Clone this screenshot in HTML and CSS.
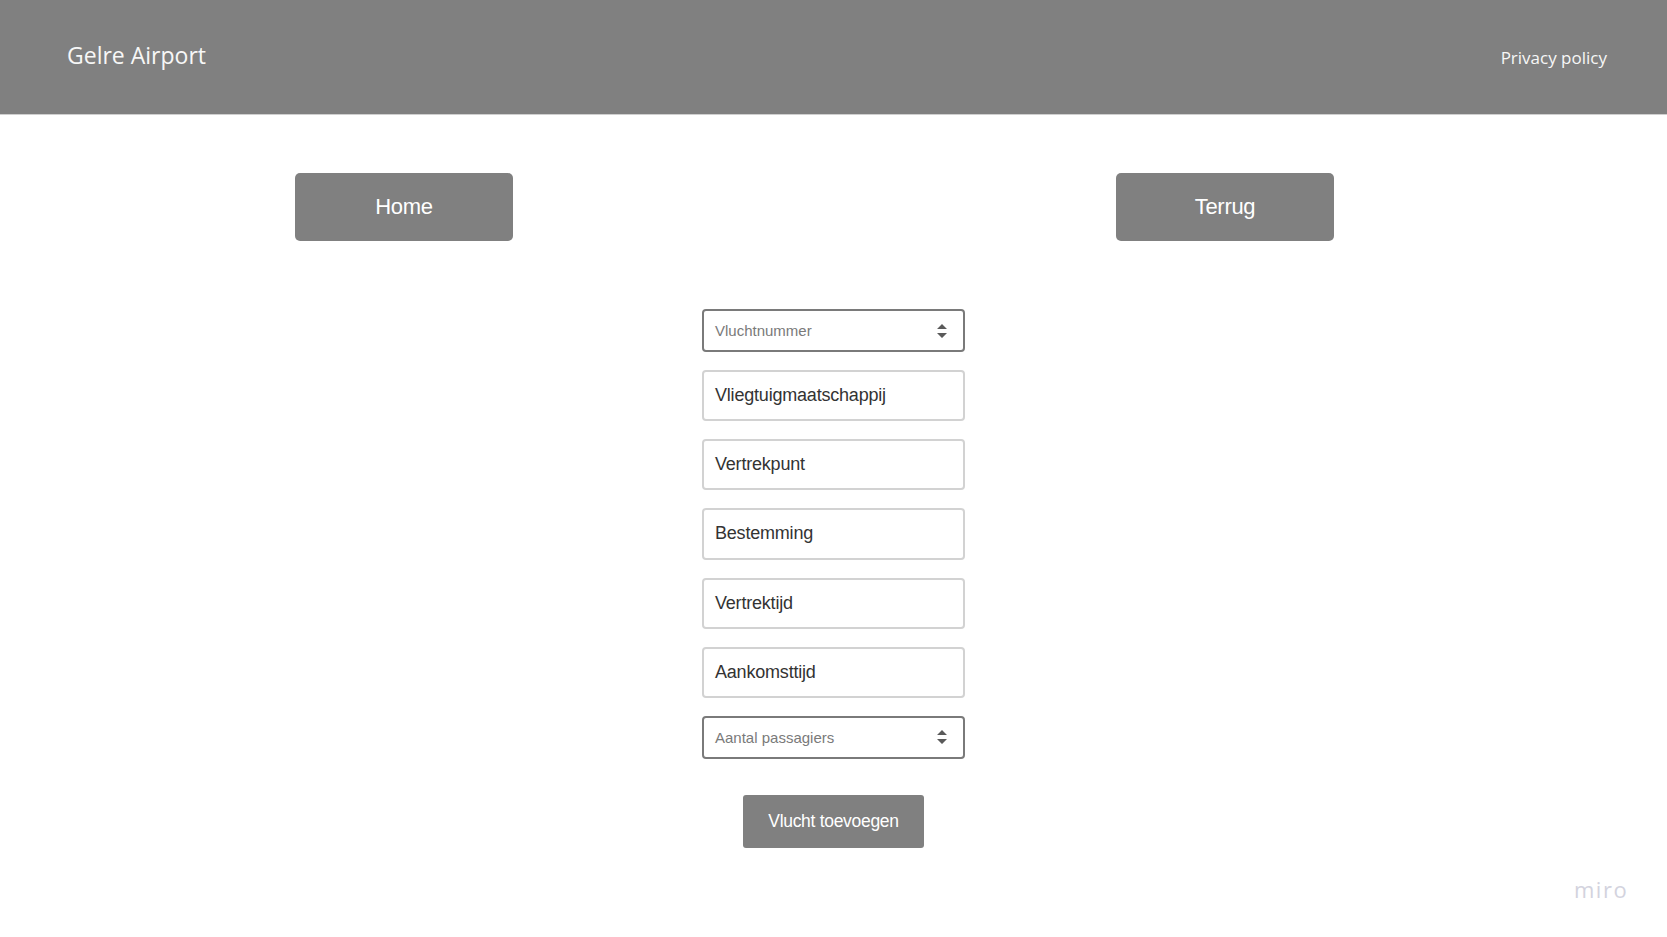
FILE: index.html
```html
<!DOCTYPE html>
<html lang="nl">
<head>
<meta charset="utf-8">
<title>Gelre Airport</title>
<link rel="stylesheet" href="styles.css">
</head>
<body>
<header class="topbar">
  <div class="brand">Gelre Airport</div>
  <a class="privacy" href="#">Privacy policy</a>
</header>
<main class="page">
  <nav class="nav-row">
    <a class="nav-btn" href="#">Home</a>
    <a class="nav-btn" href="#">Terrug</a>
  </nav>
  <form class="flight-form">
    <div class="field select">
      <span class="placeholder">Vluchtnummer</span>
      <svg class="spinner" width="10" height="16" viewBox="0 0 10 16"><path d="M0 6 L5 1 L10 6 Z M0 10 L5 15 L10 10 Z" fill="#5a5a5a"/></svg>
    </div>
    <div class="field text">Vliegtuigmaatschappij</div>
    <div class="field text">Vertrekpunt</div>
    <div class="field text">Bestemming</div>
    <div class="field text">Vertrektijd</div>
    <div class="field text">Aankomsttijd</div>
    <div class="field select">
      <span class="placeholder">Aantal passagiers</span>
      <svg class="spinner" width="10" height="16" viewBox="0 0 10 16"><path d="M0 6 L5 1 L10 6 Z M0 10 L5 15 L10 10 Z" fill="#5a5a5a"/></svg>
    </div>
    <button type="button" class="submit">Vlucht toevoegen</button>
  </form>
</main>
<div class="watermark">miro</div>
</body>
</html>
```
FILE: styles.css
```css
* { box-sizing: border-box; }
html, body { margin: 0; padding: 0; background: #ffffff; }
body { font-family: "Liberation Sans", Arial, sans-serif; height: 937px; overflow: hidden; }

.topbar {
  height: 115px;
  background: #808080;
  border-bottom: 1px solid #cfcfcf;
  display: flex;
  justify-content: space-between;
  align-items: flex-start;
  padding: 0 60px 0 67px;
  font-family: "Open Sans", "Noto Sans", sans-serif;
  color: #f7f7f7;
}
.brand { font-size: 23px; line-height: 32px; margin-top: 39px; }
.privacy { font-size: 17px; line-height: 24px; margin-top: 46px; color: #f7f7f7; text-decoration: none; }

.page { display: flex; flex-direction: column; align-items: center; }

.nav-row {
  align-self: stretch;
  display: flex;
  justify-content: space-between;
  padding: 58px 333px 0 295px;
}
.nav-btn {
  width: 218px;
  height: 68px;
  background: #808080;
  border-radius: 5px;
  color: #ffffff;
  text-decoration: none;
  font-size: 22px;
  letter-spacing: -0.3px;
  display: flex;
  align-items: center;
  justify-content: center;
}

.flight-form {
  margin-top: 68px;
  width: 263px;
  display: flex;
  flex-direction: column;
  align-items: center;
  gap: 18px;
}
.field {
  width: 263px;
  border-radius: 4px;
  display: flex;
  align-items: center;
  padding: 0 11px;
  background: #fff;
}
.field.text {
  height: 51.2px;
  border: 2px solid #d2d2d2;
  font-size: 18px;
  color: #333333;
  letter-spacing: -0.2px;
}
.field.select {
  height: 43px;
  border: 2px solid #7a7a7a;
  justify-content: space-between;
  padding-right: 16px;
}
.placeholder { font-size: 15px; color: #7a7a7a; }
.spinner { display: block; }

.submit {
  margin-top: 18px;
  width: 181px;
  height: 53px;
  border: none;
  border-radius: 3px;
  background: #808080;
  color: #ffffff;
  font-family: "Liberation Sans", Arial, sans-serif;
  font-size: 17.5px;
  letter-spacing: -0.3px;
  padding: 0;
}

.watermark {
  position: absolute;
  left: 1574px;
  top: 874px;
  font-family: "Open Sans", "Noto Sans", sans-serif;
  font-size: 22px;
  letter-spacing: 1.5px;
  color: #d3d3de;
}
```
